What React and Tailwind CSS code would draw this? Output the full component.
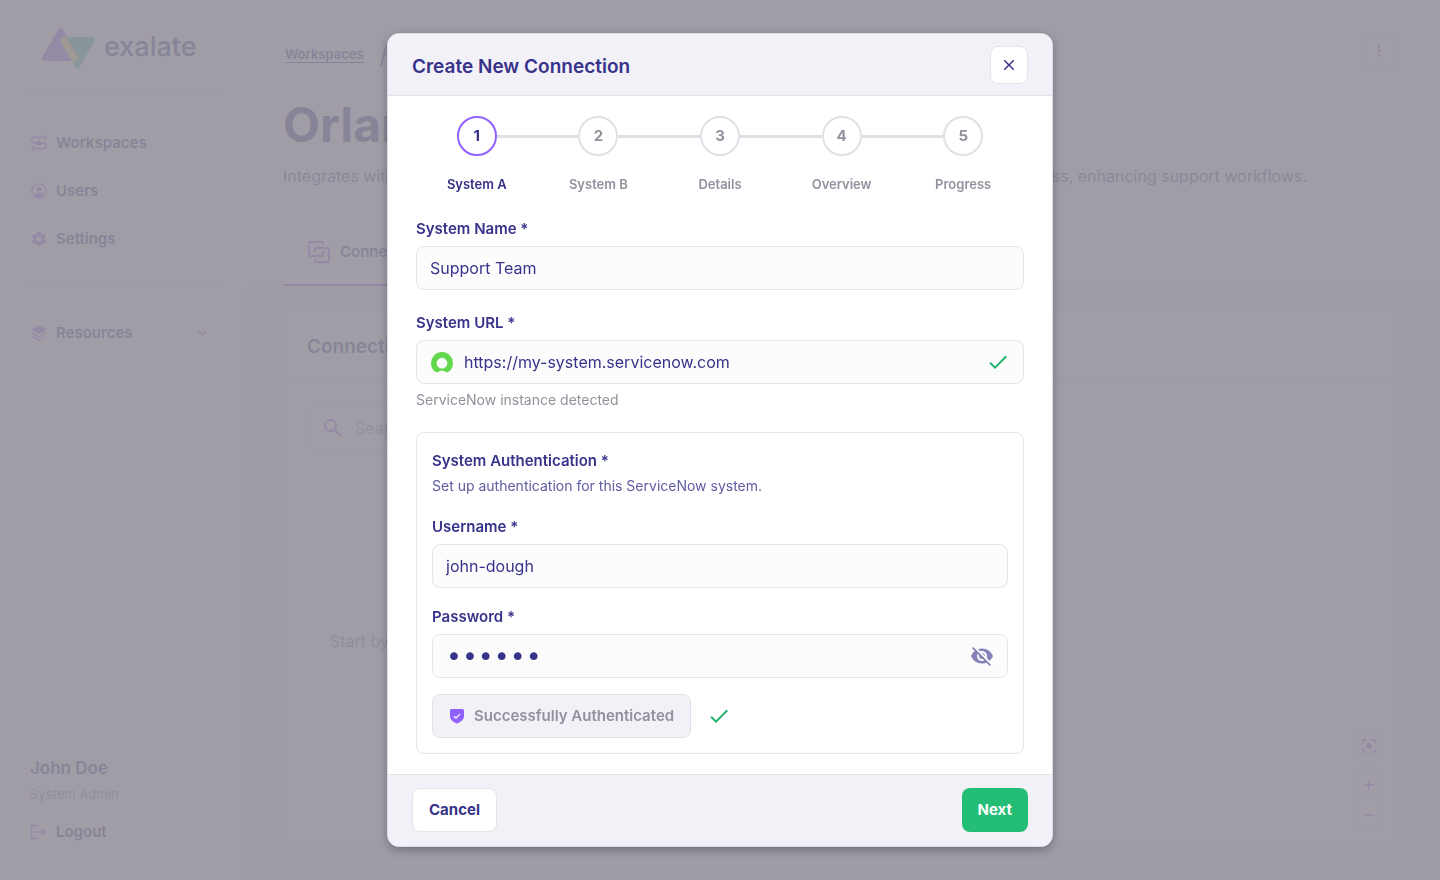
import { useState } from 'react';
import { MdCheck, MdClose, MdSearch, MdSettings, MdVisibilityOff, MdMoreVert, MdKeyboardArrowDown, MdAdd, MdRemove, MdCenterFocusStrong } from 'react-icons/md';

const steps = ['System A', 'System B', 'Details', 'Overview', 'Progress'];

const Logo = () => (
  <svg width="56" height="44" viewBox="0 0 56 44" aria-hidden="true">
    <path d="M20.5 4.5 L4.500 32.500 H36.500 Z" fill="#9061f0" stroke="#9061f0" strokeWidth="5" strokeLinejoin="round" />
    <path d="M25 13.500 H52.500 L37.500 40 Z" fill="#3fbf95" stroke="#3fbf95" strokeWidth="5" strokeLinejoin="round" />
    <path d="M24 15 L34.500 32" stroke="#f6d264" strokeWidth="7" strokeLinecap="round" />
  </svg>
);

const FlowIcon = () => (
  <svg width="16" height="16" viewBox="0 0 16 16" fill="none" stroke="currentColor" strokeWidth="1.3">
    <circle cx="13.5" cy="2.5" r="1.6" />
    <circle cx="2.5" cy="13.5" r="1.6" />
    <path d="M12 2.5H3a2.2 2.2 0 0 0-2.2 2.2v1A2.2 2.2 0 0 0 3 8h10a2.2 2.2 0 0 1 2.2 2.2v1a2.2 2.2 0 0 1-2.2 2.3H4" />
    <circle cx="8" cy="8" r="1.8" fill="currentColor" />
  </svg>
);

const UserIcon = () => (
  <svg width="16" height="16" viewBox="0 0 16 16" fill="none">
    <circle cx="8" cy="8" r="7.2" stroke="currentColor" strokeWidth="1.3" />
    <circle cx="8" cy="6" r="2.5" fill="currentColor" />
    <path d="M3 12.2C4 10.4 5.8 9.8 8 9.8s4 .6 5 2.4A6.5 6.5 0 0 1 8 14.6a6.5 6.5 0 0 1-5-2.4Z" fill="currentColor" />
  </svg>
);

const LayersIcon = () => (
  <svg width="16" height="16" viewBox="0 0 16 16" fill="none">
    <path d="M8 .2 15.5 4.5 8 8.9.5 4.5Z" fill="currentColor" />
    <path d="m.8 7.8 7.2 4.2 7.2-4.2M.8 11 8 15.2 15.2 11" stroke="currentColor" strokeWidth="1.2" />
  </svg>
);

const LogoutIcon = () => (
  <svg width="16" height="16" viewBox="0 0 16 16" fill="none" stroke="currentColor" strokeWidth="1.4">
    <path d="M8 1.5H1.5v13H8M5 8h10M11.5 4.5 15 8l-3.5 3.5" />
  </svg>
);

const ConnectionsIcon = () => (
  <svg width="22" height="22" viewBox="0 0 22 22" fill="none" stroke="currentColor" strokeWidth="1.8">
    <path d="M15 4V2a1 1 0 0 0-1-1H2a1 1 0 0 0-1 1v12a1 1 0 0 0 1 1h12a1 1 0 0 0 1-1v-4" />
    <path d="M7 11V8a1 1 0 0 1 1-1h12a1 1 0 0 1 1 1v12a1 1 0 0 1-1 1H8a1 1 0 0 1-1-1v-2" />
  </svg>
);

const ServiceNowIcon = () => (
  <svg width="24" height="24" viewBox="0 -1 24 24" aria-hidden="true">
    <path
      fill="#62d84e"
      fillRule="evenodd"
      d="M5.6 21A11 11 0 1 1 18.4 21C17.6 21.6 16.6 21.6 15.9 21 13.7 19.2 10.3 19.2 8.1 21 7.4 21.6 6.4 21.6 5.6 21ZM12 6.8a5.4 5.4 0 1 0 0 10.8 5.4 5.4 0 0 0 0-10.8Z"
    />
  </svg>
);

const ShieldIcon = () => (
  <svg width="16" height="16" viewBox="0 0 16 16" fill="none" aria-hidden="true">
    <path d="M2.5 1h11A1.5 1.5 0 0 1 15 2.5V8c0 4-3.5 6.2-7 7.5C4.5 14.2 1 12 1 8V2.5A1.5 1.5 0 0 1 2.5 1Z" fill="#9061ff" />
    <path d="m5 8.2 2 1.9 4-4" stroke="#fff" strokeWidth="1.3" />
  </svg>
);

const navItems = [
  { label: 'Workspaces', Icon: FlowIcon },
  { label: 'Users', Icon: UserIcon },
  { label: 'Settings', Icon: () => <MdSettings size={18} className="-mx-px" /> },
];

function Sidebar() {
  return (
    <aside className="flex w-[243px] shrink-0 flex-col bg-white px-5 pb-7">
      <div className="flex h-24 items-center gap-2 border-b border-[#efedfa] pl-5">
        <Logo />
        <span className="text-[27px] font-medium">exalate</span>
      </div>
      <nav className="flex flex-col border-b border-[#efedfa] pt-[23px] pb-[23px]">
        {navItems.map(({ label, Icon }) => (
          <a key={label} href="#" className="flex h-12 items-center gap-[9px] pl-[11px] text-[15px] font-semibold">
            <span className="text-[#9061ff]"><Icon /></span>
            {label}
          </a>
        ))}
      </nav>
      <button className="mt-[22px] flex h-12 items-center gap-[9px] pr-3 pl-[11px] text-[15px] font-semibold">
        <span className="text-[#9061ff]"><LayersIcon /></span>
        Resources
        <MdKeyboardArrowDown size={18} className="ml-auto text-[#9061ff]" />
      </button>
      <div className="mt-auto pl-2.5">
        <p className="text-[17px] leading-6 font-semibold">John Doe</p>
        <p className="mt-1 text-[13px] leading-5 text-[#82819a]">System Admin</p>
        <a href="#" className="mt-2 flex h-10 items-center gap-2.5 text-[15px] font-semibold">
          <span className="text-[#9061ff]"><LogoutIcon /></span>
          Logout
        </a>
      </div>
    </aside>
  );
}

function Workspace() {
  return (
    <main className="flex min-w-0 flex-1 flex-col bg-[#f5f2fd]">
      <header className="bg-[#fcfbff] px-10">
        <div className="flex h-[100px] items-center justify-between px-0.5 pt-px">
          <nav className="flex items-center gap-4 pt-2 text-[13px] font-semibold">
            <a href="#" className="border-b border-[#37338a] leading-4">Workspaces</a>
            <span className="text-2xl font-light">/</span>
          </nav>
          <button aria-label="More actions" className="flex size-[38px] items-center justify-center rounded-lg border border-[#e9e6f8] bg-white text-[#9061ff]">
            <MdMoreVert size={18} />
          </button>
        </div>
        <h1 className="text-5xl leading-[50px] font-bold">Orlando</h1>
        <p className="mt-3.5 flex max-w-[1024px] justify-between leading-6 text-[#54519a]">
          <span>Integrates with</span>
          <span>progress, enhancing support workflows.</span>
        </p>
        <div className="mt-[34px] flex">
          <button className="flex h-16 items-center gap-2.5 border-b-2 border-[#9061ff] px-[25px] pb-0.5 text-[15px] font-semibold">
            <span className="text-[#9061ff]"><ConnectionsIcon /></span>
            Connections
          </button>
        </div>
      </header>
      <section className="mx-10 mt-[23px] mb-8 flex flex-1 flex-col rounded-xl border border-[#e4e1f5] bg-white">
        <h2 className="flex h-[72px] items-center border-b border-[#e4e1f5] px-[23px] pt-1 text-[19px] font-semibold">Connections</h2>
        <div className="flex flex-1 justify-between px-6 pt-6 pb-4">
          <div className="flex flex-col">
            <label className="flex h-11 items-center gap-2.5 rounded-lg border border-[#e4e1f5] px-3">
              <MdSearch size={24} className="text-[#9061ff]" />
              <input aria-label="Search" placeholder="Search" className="w-40 placeholder:text-[#9a99ab]" />
            </label>
            <p className="mt-[179px] pl-[22px] leading-6 text-[#82819a]">Start by</p>
          </div>
          <div className="-mr-2 flex flex-col justify-end gap-2 text-[#9061ff]">
            <button aria-label="Fit view" className="flex h-[31px] w-7 items-center justify-center rounded-md border border-[#e4e1f5]">
              <MdCenterFocusStrong size={18} />
            </button>
            <div className="flex flex-col divide-y divide-[#e4e1f5] rounded-md border border-[#e4e1f5]">
              <button aria-label="Zoom in" className="flex h-[30px] w-[26px] items-center justify-center"><MdAdd size={18} /></button>
              <button aria-label="Zoom out" className="flex h-[30px] w-[26px] items-center justify-center"><MdRemove size={18} /></button>
            </div>
          </div>
        </div>
      </section>
    </main>
  );
}

function Stepper({ current }) {
  return (
    <ol className="grid grid-cols-5">
      {steps.map((label, i) => {
        const active = i === current;
        return (
          <li key={label} className="flex flex-col items-center">
            <div className="flex w-full items-center">
              <span className={i === 0 ? 'flex-1' : 'h-[3px] flex-1 bg-[#e1e0e7]'} />
              <span className={`flex size-10 items-center justify-center rounded-full border-2 text-[15px] font-bold ${active ? 'border-[#9061ff] text-[#37338a]' : 'border-[#e1e0e7] text-[#92919d]'}`}>
                {i + 1}
              </span>
              <span className={i === steps.length - 1 ? 'flex-1' : 'h-[3px] flex-1 bg-[#e1e0e7]'} />
            </div>
            <span className={`mt-[18px] text-[13px] leading-5 font-semibold ${active ? 'text-[#37338a]' : 'text-[#92919d]'}`}>{label}</span>
          </li>
        );
      })}
    </ol>
  );
}

const fieldBox = 'flex h-11 items-center rounded-lg border border-[#e4e3ef] bg-[#fcfcfc]';
const labelText = 'mb-1.5 block text-[15px] leading-[22px] font-semibold';

function ConnectionModal() {
  const [name, setName] = useState('Support Team');
  const [url, setUrl] = useState('https://my-system.servicenow.com');
  const [username, setUsername] = useState('john-dough');
  const [password, setPassword] = useState('secret');

  return (
    <div role="dialog" aria-labelledby="modal-title" className="flex w-full max-w-[666px] flex-col overflow-hidden rounded-xl border border-[#dddce5] bg-white shadow-[0_3px_10px_rgba(60,55,75,0.45)]">
      {/* Header */}
      <div className="flex h-[62px] items-center justify-between border-b border-[#e4e3ea] bg-[#f2f1f7] px-6">
        <h2 id="modal-title" className="pt-1 text-[19px] leading-7 font-semibold">Create New Connection</h2>
        <button aria-label="Close" className="flex size-[38px] items-center justify-center rounded-lg border border-[#e4e3ea] bg-white">
          <MdClose size={18} />
        </button>
      </div>

      {/* Body */}
      <form className="px-7 py-5">
        <Stepper current={0} />

        <label htmlFor="name" className={`mt-6 ${labelText}`}>System Name *</label>
        <div className={fieldBox}>
          <input id="name" value={name} onChange={(e) => setName(e.target.value)} className="h-full w-full px-[13px] outline-none" />
        </div>

        <label htmlFor="url" className={`mt-[22px] ${labelText}`}>System URL *</label>
        <div className={`${fieldBox} gap-2.5 px-[13px]`}>
          <ServiceNowIcon />
          <input id="url" value={url} onChange={(e) => setUrl(e.target.value)} className="h-full flex-1 outline-none" />
          <MdCheck size={24} className="text-[#23b36f]" />
        </div>
        <p className="mt-1.5 text-sm leading-5 text-[#92919d]">ServiceNow instance detected</p>

        {/* Authentication */}
        <fieldset className="mt-[22px] rounded-lg border border-[#e4e3ef] px-[15px] pt-[17px] pb-[15px]">
          <h3 className="text-[15px] leading-[22px] font-semibold">System Authentication *</h3>
          <p className="mt-1 text-sm leading-5 text-[#5f5ca1]">Set up authentication for this ServiceNow system.</p>

          <label htmlFor="username" className={`mt-5 ${labelText}`}>Username *</label>
          <div className={fieldBox}>
            <input id="username" value={username} onChange={(e) => setUsername(e.target.value)} className="h-full w-full px-[13px] outline-none" />
          </div>

          <label htmlFor="password" className={`mt-[18px] ${labelText}`}>Password *</label>
          <div className={`${fieldBox} px-[13px]`}>
            <input
              id="password"
              type="password"
              value={password}
              onChange={(e) => setPassword(e.target.value)}
              className="h-full flex-1 font-['DejaVu_Sans',sans-serif] text-[27px] outline-none"
            />
            <button type="button" aria-label="Show password" className="text-[#8582b9]">
              <MdVisibilityOff size={24} />
            </button>
          </div>

          <div className="mt-4 flex items-center gap-4">
            <button type="button" disabled className="flex h-11 items-center gap-[9px] rounded-lg border border-[#e1e0e7] bg-[#f2f1f7] px-4 text-[15px] font-semibold text-[#92919d]">
              <ShieldIcon />
              Successfully Authenticated
            </button>
            <MdCheck size={24} className="text-[#23b36f]" />
          </div>
        </fieldset>
      </form>

      {/* Footer */}
      <div className="flex justify-between border-t border-[#e4e3ea] bg-[#f2f1f7] px-6 pt-[13px] pb-3.5 text-[15px] font-bold">
        <button className="h-11 rounded-lg border border-[#e4e3ea] bg-white px-4">Cancel</button>
        <button className="h-11 rounded-lg bg-[#23bd76] px-4 text-white">Next</button>
      </div>
    </div>
  );
}

export default function App() {
  return (
    <div className="font-['Inter',sans-serif] text-[#37338a]">
      <div className="flex min-h-screen">
        <Sidebar />
        <Workspace />
      </div>
      <div className="fixed inset-0 flex items-center justify-center bg-[rgb(147,144,154)]/88">
        <ConnectionModal />
      </div>
    </div>
  );
}
